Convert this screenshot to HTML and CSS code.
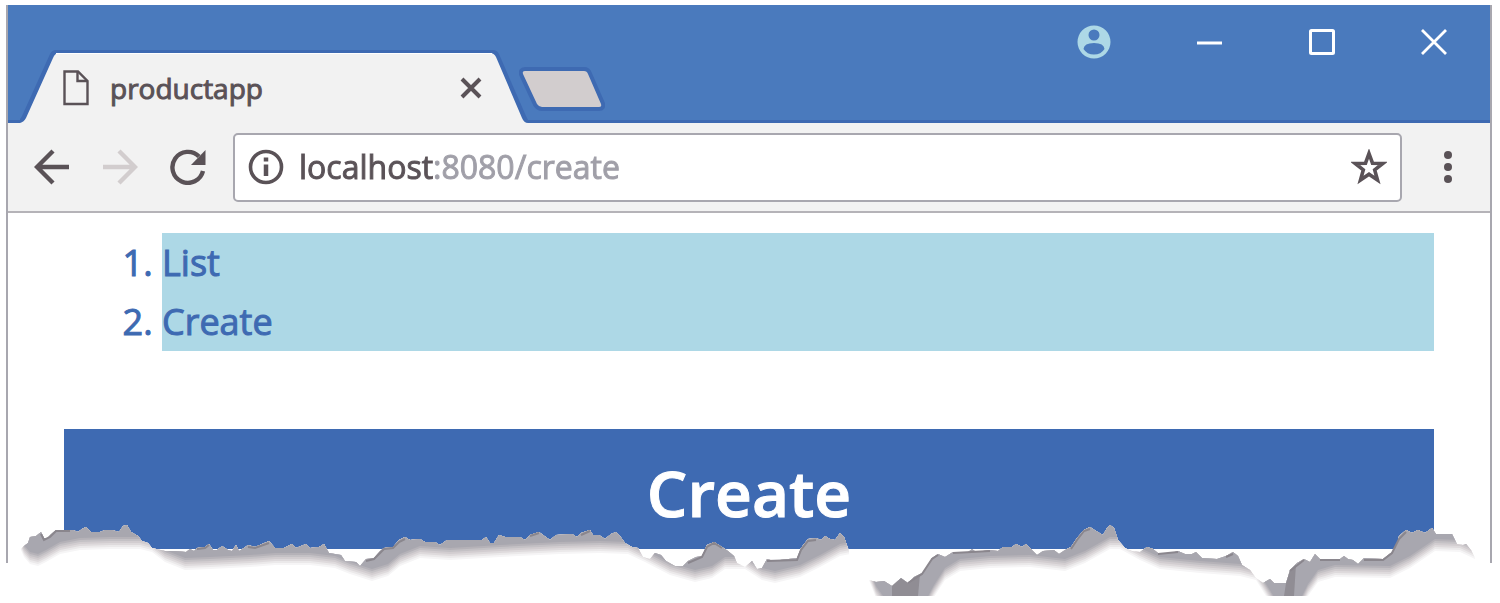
FILE: index.html
```html
<!DOCTYPE html>
<html lang="en">
<head>
<meta charset="utf-8">
<title>productapp</title>
<link rel="stylesheet" href="styles.css">
</head>
<body>
<div class="page">
  <div class="window">
    <header class="titlebar">
      <div class="tab">
        <svg class="tab-shape" viewBox="0 0 508 74" preserveAspectRatio="none" aria-hidden="true">
          <path d="M0 74V70Q1 69 2 67L30 5Q32 1 36 1H473Q477 1 479 5L506 67L508 71V74Z" fill="#3e6ab2"/>
          <path d="M0 74Q4 73 6 69L33 9Q35 4 39 4H470Q474 4 476 8L502 69Q504 74 508 74Z" fill="#f2f2f2"/>
          <path d="M36 4.500H472" stroke="#fff"/>
        </svg>
        <svg class="file-icon" viewBox="0 0 26 36" fill="none" stroke="#5a5257" stroke-width="2.400" aria-hidden="true">
          <path d="M1.500 1.500H15L24.500 11V34H1.500Z"/><path d="M14.500 2V11H24"/>
        </svg>
        <span class="tab-title">productapp</span>
        <button class="icon-button tab-close" aria-label="Close tab">
          <svg width="22" height="22" viewBox="0 0 22 22" stroke="#5a5257" stroke-width="4"><path d="M2 2L20 20M20 2L2 20"/></svg>
        </button>
      </div>
      <button class="icon-button new-tab" aria-label="New tab">
        <svg width="86" height="46" viewBox="0 0 86 46"><path d="M6 4H65Q68 4 69 7L82 37Q83 40 80 40H23Q20 40 18 37L4 7Q3 4 6 4Z" fill="#d2cdce" stroke="#3e6ab2" stroke-width="8" paint-order="stroke"/></svg>
      </button>
      <div class="window-controls">
        <button class="icon-button" aria-label="Profile">
          <svg width="34" height="34" viewBox="0 0 34 34"><path fill="#add8e6" fill-rule="evenodd" d="M17 .5A16.500 16.500 0 1 1 17 33.500A16.500 16.500 0 1 1 17 .5ZM17 4.500A5.500 5.500 0 1 0 17 15.500A5.500 5.500 0 1 0 17 4.500ZM6.500 24Q10 29.500 17 29.500Q24 29.500 27.500 24Q27 18 17 18Q7 18 6.500 24Z"/></svg>
        </button>
        <button class="icon-button" aria-label="Minimize">
          <svg width="26" height="26" viewBox="0 0 26 26"><path d="M0 14H25" stroke="#fff" stroke-width="3"/></svg>
        </button>
        <button class="icon-button" aria-label="Maximize">
          <svg width="26" height="26" viewBox="0 0 26 26"><rect x="1.500" y="1.500" width="23" height="23" rx="1" fill="none" stroke="#fff" stroke-width="3"/></svg>
        </button>
        <button class="icon-button" aria-label="Close">
          <svg width="26" height="26" viewBox="0 0 26 26"><path d="M1 1L25 25M25 1L1 25" stroke="#fff" stroke-width="2.800"/></svg>
        </button>
      </div>
    </header>
    <div class="toolbar">
      <nav class="history" aria-label="History">
        <button class="icon-button" aria-label="Back">
          <svg width="36" height="36" viewBox="0 0 36 36" fill="none" stroke="#5a5257" stroke-width="4.400"><path d="M35 18H3M19 2L3 18L19 34"/></svg>
        </button>
        <button class="icon-button" aria-label="Forward">
          <svg width="36" height="36" viewBox="0 0 36 36" fill="none" stroke="#d2cdce" stroke-width="4.400"><path d="M1 18H33M17 2L33 18L17 34"/></svg>
        </button>
        <button class="icon-button" aria-label="Reload">
          <svg width="36" height="36" viewBox="0 0 36 36"><path d="M33 22A15.500 15.500 0 1 1 29 7.500" fill="none" stroke="#5a5257" stroke-width="4.400"/><path d="M35.500 1V16H21Z" fill="#5a5257"/></svg>
        </button>
      </nav>
      <form class="omnibox">
        <button class="icon-button" type="button" aria-label="Site information">
          <svg width="36" height="36" viewBox="0 0 36 36"><circle cx="18" cy="18" r="15.500" fill="none" stroke="#5a5257" stroke-width="3.600"/><path d="M18 15.500V27M18 8.500V12.500" stroke="#5a5257" stroke-width="4.500"/></svg>
        </button>
        <input class="address" type="text" aria-label="Address" value="localhost:8080/create">
        <button class="icon-button" type="button" aria-label="Bookmark this page">
          <svg width="36" height="36" viewBox="0 0 36 36"><path d="M18 4.500L21.500 14.200L31.800 14.500L23.700 20.900L26.500 31L18 25.200L9.500 31L12.300 20.900L4.200 14.500L14.500 14.200Z" fill="none" stroke="#5a5257" stroke-width="3.600"/></svg>
        </button>
      </form>
      <button class="icon-button menu" aria-label="Menu">
        <svg width="10" height="36" viewBox="0 0 10 36" fill="#5a5257"><circle cx="5" cy="6" r="4"/><circle cx="5" cy="18" r="4"/><circle cx="5" cy="30" r="4"/></svg>
      </button>
    </div>
    <main class="content">
      <ol class="routes">
        <li><a href="#list">List</a></li>
        <li><a href="#create">Create</a></li>
      </ol>
      <h1 class="banner">Create</h1>
    </main>
  </div>
  <svg class="torn-edge" viewBox="0 520 1500 83" preserveAspectRatio="none" aria-hidden="true">
    <defs>
      <clipPath id="left-tear"><path d="M20 550L24 546L28 543L30 537L36 536L41 532L44 538L47 539L50 535L56 530L73 530L78 532L82 529L86 527L91 532L100 532L105 530L112 530L119 532L123 526L127 525L131 532L138 536L142 541L148 543L152 548L165 551L176 551L186 552L190 549L194 551L197 548L205 547L209 544L213 550L217 550L222 546L228 550L232 551L236 545L239 551L244 548L248 545L255 547L262 544L269 541L275 548L284 548L292 544L296 548L306 544L310 548L319 547L324 544L329 553L341 555L345 561L356 562L360 566L366 559L374 558L380 551L384 548L393 547L399 540L405 537L410 540L420 539L425 542L435 542L440 545L447 540L482 540L486 537L490 543L494 543L499 535L505 537L520 537L525 540L530 535L539 532L543 535L550 540L556 535L572 534L577 537L581 533L590 530L593 535L599 535L605 539L611 534L616 532L620 536L625 543L632 547L638 548L643 557L650 559L655 553L661 555L666 561L675 566L683 566L688 561L696 557L702 556L707 545L714 542L722 547L728 551L734 556L737 563L745 567L752 561L757 569L762 568L767 559L774 561L780 560L797 558L801 548L808 539L816 538L821 540L825 536L830 539L835 540L840 533L844 537L849 551L850 603H20Z"/></clipPath>
      <clipPath id="right-tear"><path d="M869 580L876 582L884 581L892 586L901 578L908 583L914 577L922 573L927 567L932 558L938 554L945 557L953 552L967 553L972 549L976 552L990 550L998 551L1003 547L1012 547L1016 544L1022 547L1026 544L1031 549L1037 555L1043 551L1054 550L1059 554L1065 550L1071 547L1077 538L1084 530L1090 527L1096 531L1103 535L1107 528L1110 525L1114 528L1118 540L1125 548L1132 551L1140 552L1147 547L1153 549L1158 553L1172 553L1178 551L1185 554L1192 554L1196 552L1202 558L1217 559L1226 556L1233 552L1238 556L1242 565L1250 570L1256 578L1263 583L1270 579L1274 583L1286 583L1290 570L1297 563L1304 559L1310 562L1315 554L1320 559L1340 559L1344 556L1348 559L1353 560L1358 564L1364 558L1383 559L1392 552L1397 545L1399 536L1406 530L1412 533L1418 530L1425 533L1432 528L1436 534L1452 534L1457 544L1463 545L1466 544L1471 550L1475 558V596H869Z"/></clipPath>
      <path id="left-shade" d="M20 500V548L24 557L30 564L38 566L46 562L60 554L80 550L110 549L140 549L152 552L165 562L185 570L210 569L250 567L275 565L310 565L335 568L350 574L372 581L388 576L400 566L420 558L450 560L500 557L560 554L600 553L628 554L645 562L670 575L695 582L712 578L725 569L745 569L762 580L775 583L800 577L820 567L840 556L850 554V500Z"/>
      <path id="right-shade" d="M869 500V580L876 598L886 612H926L934 597L945 580L960 571L990 568L1030 567L1065 571L1085 563L1110 549L1120 549L1140 560L1160 569L1200 573L1240 576L1256 580L1266 596L1276 612H1300L1308 596L1318 582L1335 577L1390 578L1410 568L1435 551L1460 552L1475 559V500Z"/>
    </defs>
    <g clip-path="url(#left-tear)">
      <path d="M20 520H850V603H20Z" fill="#fff"/>
      <use href="#left-shade" fill="#f6f5f6"/>
      <use href="#left-shade" y="-2" fill="#ebe9ea"/>
      <use href="#left-shade" y="-4" fill="#dedadc"/>
      <use href="#left-shade" y="-6" fill="#d2cdd0"/>
      <use href="#left-shade" y="-8" fill="#c4c1c5"/>
      <use href="#left-shade" y="-10" fill="#b5b2b8"/>
      <use href="#left-shade" y="-12" fill="#a8a7af"/>
    </g>
    <g clip-path="url(#right-tear)">
      <path d="M869 520H1475V603H869Z" fill="#fff"/>
      <use href="#right-shade" fill="#f6f5f6"/>
      <use href="#right-shade" y="-2" fill="#ebe9ea"/>
      <use href="#right-shade" y="-4" fill="#dedadc"/>
      <use href="#right-shade" y="-6" fill="#d2cdd0"/>
      <use href="#right-shade" y="-8" fill="#c4c1c5"/>
      <use href="#right-shade" y="-10" fill="#b5b2b8"/>
      <use href="#right-shade" y="-12" fill="#a8a7af"/>
      <path d="M892 586L901 578L908 583L914 577L920 574L918 596H892ZM1286 583L1290 570L1296 564L1294 596H1284Z" fill="#908d94"/>
    </g>
    <path d="M41 534L44 540L50 537L56 531H70M197 549L205 548L209 545M248 547L255 548L269 543M366 561L374 559L384 549L393 548L399 542L405 539M530 536L539 533M581 535L590 531M688 563L702 557L707 547L714 543L722 548M767 561L797 560L801 550L808 541L816 540M908 583L922 574L932 559L938 555M953 553L990 551M1071 549L1077 540L1084 531L1090 529M1158 554L1178 552M1226 557L1233 554M1290 571L1304 560M1320 560H1340M1364 560L1383 560L1392 553L1399 539L1406 532" fill="none" stroke="#8a868d" stroke-width="2"/>
  </svg>
</div>
</body>
</html>
```
FILE: styles.css
```css
* {
  box-sizing: border-box;
}

body {
  margin: 0;
  background: #fff;
  font-family: "Open Sans", "Noto Sans", sans-serif;
}

.page {
  position: relative;
  padding: 5px 8px 40px 6px;
}

.window {
  border: solid #a8a7af;
  border-width: 0 2px;
}

.icon-button {
  display: flex;
  flex: none;
  padding: 0;
  border: 0;
  background: none;
}

.titlebar {
  display: flex;
  align-items: flex-end;
  height: 118px;
  padding-left: 12px;
  background: #4a7abd;
  border-bottom: 3px solid #3e6ab2;
}

.tab {
  position: relative;
  display: flex;
  align-items: center;
  width: 508px;
  height: 70px;
  margin-bottom: -3px;
  padding: 0 46px 0 43px;
}

.tab-shape {
  position: absolute;
  inset: -4px 0 0;
  width: 100%;
  height: 74px;
}

.file-icon {
  position: relative;
  width: 26px;
  height: 36px;
}

.tab-title {
  position: relative;
  flex: 1;
  margin-left: 21px;
  color: #5a5257;
  font-size: 28px;
  line-height: 36px;
  -webkit-text-stroke: 1px;
}

.tab-close {
  position: relative;
}

.new-tab {
  margin-bottom: 7px;
  margin-left: -9px;
}

.window-controls {
  display: flex;
  align-items: center;
  align-self: flex-start;
  gap: 86px;
  margin-left: auto;
  padding: 20px 43px 0 0;
}

.toolbar {
  display: flex;
  align-items: center;
  height: 90px;
  padding: 0 37px 0 26px;
  background: #f2f2f2;
  border-bottom: 2px solid #b5b3b8;
}

.history {
  display: flex;
  gap: 32px;
  margin-right: 27px;
}

.omnibox {
  display: flex;
  flex: 1;
  align-items: center;
  height: 69px;
  margin: 0;
  padding: 0 13px;
  background: #fff;
  border: 2px solid #a8a7af;
  border-radius: 5px;
}

.address {
  flex: 1;
  min-width: 0;
  height: 48px;
  margin: 0 15px;
  padding: 0;
  border: 0;
  outline: 0;
  background: linear-gradient(to right, #5a5257 134px, #a09fa8 134px);
  background-clip: text;
  color: transparent;
  font: 32px/48px "Open Sans", "Noto Sans", sans-serif;
  -webkit-text-stroke: 1px transparent;
}

.menu {
  margin-left: 41px;
}

.content {
  padding: 20px 56px 14px;
}

.routes {
  margin: 0 0 78px;
  padding-left: 98px;
  color: #3e6ab2;
  font-size: 36px;
  line-height: 59px;
  -webkit-text-stroke: 1px;
}

.routes li {
  background: #add8e6;
}

.routes a {
  color: inherit;
  text-decoration: none;
}

.banner {
  margin: 0;
  padding: 24px 0 16px;
  background: #3e6ab2;
  color: #fff;
  font-size: 64px;
  font-weight: 600;
  line-height: 80px;
  text-align: center;
  -webkit-text-stroke: 1px;
}

.torn-edge {
  position: absolute;
  bottom: 0;
  left: 0;
  width: 100%;
  height: 83px;
}
```
